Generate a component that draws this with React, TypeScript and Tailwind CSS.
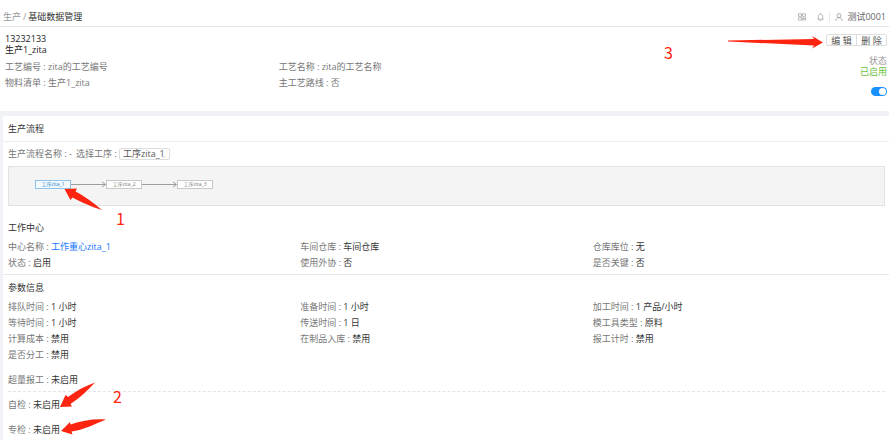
import { Fragment, useState } from 'react';
import type { ReactNode } from 'react';

type Item = { label: string; value: ReactNode };

const processes = ['工序zita_1', '工序zita_2', '工序zita_3'];

const workCenter: Item[] = [
  { label: '中心名称', value: <a href="#center" className="text-[#1677ff]">工作重心zita_1</a> },
  { label: '车间仓库', value: '车间仓库' },
  { label: '仓库库位', value: '无' },
  { label: '状态', value: '启用' },
  { label: '使用外协', value: '否' },
  { label: '是否关键', value: '否' },
];

const params: Item[] = [
  { label: '排队时间', value: '1 小时' },
  { label: '准备时间', value: '1 小时' },
  { label: '加工时间', value: '1 产品/小时' },
  { label: '等待时间', value: '1 小时' },
  { label: '传送时间', value: '1 日' },
  { label: '模工具类型', value: '原料' },
  { label: '计算成本', value: '禁用' },
  { label: '在制品入库', value: '禁用' },
  { label: '报工计时', value: '禁用' },
  { label: '是否分工', value: '禁用' },
];

function Colon() {
  return <span className="font-['Noto_Sans_CJK_TC',sans-serif] text-[7px]">：</span>;
}

function Field({ label, value }: Item) {
  return (
    <div className="text-[#333]">
      <span className="text-[#777]">{label}<Colon /></span>
      {value}
    </div>
  );
}

function Flow({ active, onSelect }: { active: string; onSelect: (name: string) => void }) {
  return (
    <div className="flex h-10 items-start border border-[#e2e2e2] bg-[#f4f4f4] pt-[13px] pl-[26px]">
      {processes.map((name, i) => (
        <Fragment key={name}>
          {i > 0 && (
            <svg className="h-[9px] w-[35px]" viewBox="0 0 35 9" fill="none" stroke="#888" strokeWidth="0.8">
              <path d="M0 4.5H34M31 2L34.5 4.5L31 7" />
            </svg>
          )}
          <button
            onClick={() => onSelect(name)}
            className={
              name === active
                ? 'h-[9px] w-9 border border-[#91c3ea] bg-[#f3faff] text-[5px] leading-[7px] text-[#2581c4]'
                : 'h-[9px] w-9 border border-[#c8c8c8] bg-white text-[5px] leading-[7px] text-[#777]'
            }
          >
            {name}
          </button>
        </Fragment>
      ))}
    </div>
  );
}

function Header() {
  return (
    <header className="flex items-center justify-between border-b border-[#e4e4e4] bg-white pt-2 pr-[3px] pl-[3px] leading-[18px]">
      <nav className="text-[#999]">
        <a href="#production">生产</a>
        <span className="px-[2px]">/</span>
        <span className="text-[#333]">基础数据管理</span>
      </nav>
      <div className="flex items-center text-[#666]">
        <button aria-label="扫码">
          <svg className="size-2" viewBox="0 0 8 8" fill="none" stroke="#aaa" strokeWidth="0.8">
            <path d="M0.5 0.8H3.5V3.3H0.5ZM4.5 0.8H7.5V3.3H4.5ZM0.5 4.6H3.5V7.2H0.5ZM4.7 4.3V7.5M6 4.3V7.5M4.7 5.8H7.7M7.5 4.3V7.5" />
          </svg>
        </button>
        <button aria-label="通知" className="ml-[10px]">
          <svg className="h-2 w-[9px]" viewBox="0 0 9 8" fill="none" stroke="#999" strokeWidth="0.7">
            <path d="M1.5 6.3H7.5M2.3 6.2V3.5C2.3 0.4 6.7 0.4 6.7 3.5V6.2M4.5 0.3V1M3.8 7.5H5.2" />
          </svg>
        </button>
        <span className="ml-1 h-[10px] w-px bg-[#e8e8e8]" />
        <svg className="ml-[5px] size-2" viewBox="0 0 8 8" fill="none" stroke="#999" strokeWidth="0.8">
          <circle cx="4" cy="2.6" r="2" />
          <path d="M0.8 8C0.9 5.8 2.2 4.6 4 4.6C5.8 4.6 7.1 5.8 7.2 8" />
        </svg>
        <span className="ml-1">测试0001</span>
      </div>
    </header>
  );
}

function Summary() {
  const [enabled, setEnabled] = useState(true);
  return (
    <section className="flex bg-white pt-[6px] pr-[2px] pb-[15px] pl-[5px]">
      <div className="flex-1">
        <h1 className="leading-[11px] text-[#222]">13232133<br />生产1_zita</h1>
        <div className="mt-1 grid grid-cols-3 leading-4 text-[#777]">
          <div>工艺编号 : zita的工艺编号</div>
          <div>工艺名称 : zita的工艺名称</div>
          <div className="col-start-1">物料清单 : 生产1_zita</div>
          <div>主工艺路线 : 否</div>
        </div>
      </div>
      <div className="flex flex-col items-end">
        <div className="flex pt-px">
          <button className="h-3 w-[31px] rounded-l-xs border border-[#ddd] leading-3 text-[#555]">编 辑</button>
          <button className="-ml-px h-3 w-[31px] rounded-r-xs border border-[#ddd] leading-3 text-[#555]">删 除</button>
        </div>
        <div className="mt-[9px] leading-[11px] text-[#999]">状态</div>
        <div className="leading-[11px] text-[#67c23a]">已启用</div>
        <label className="mt-[10px] flex">
          <input
            type="checkbox"
            role="switch"
            aria-label="启用状态"
            checked={enabled}
            onChange={(e) => setEnabled(e.target.checked)}
            className="flex h-[9px] w-4 appearance-none items-center rounded-full bg-[#bbb] px-px before:size-[7px] before:rounded-full before:bg-white checked:justify-end checked:bg-[#1890ff]"
          />
        </label>
      </div>
    </section>
  );
}

// Red numbered callouts laid over the page
function Callouts() {
  return (
    <div className="pointer-events-none absolute inset-0 font-['Noto_Sans_CJK_SC',sans-serif] text-base leading-4 text-[#fe2510]">
      <svg className="absolute top-0 left-0 h-[440px] w-[120px]" viewBox="0 0 120 440" fill="#fe2510">
        <path d="M64.5 189L77 188.5L75.5 191.5C84 196 94 203 102 210C92 207 81 202 72.5 197.5L70.5 200Z" />
        <path d="M60 407L65.5 395L68 397C76 391 85 386 95 382.5C89 389 80 398 70.5 404L72 406.5Z" />
        <path d="M61 431L70 422L70.5 424.5C82 420.5 94 418.5 106 419.5C95 424 83 430 71.5 431.5L72.5 434.5Z" />
      </svg>
      <svg className="absolute top-9 right-[66px] h-[13px] w-[95px]" viewBox="0 0 95 13" fill="#fe2510">
        <path d="M0 4.5L86 3L84 0L95 6.5L84 12.5L86 9.5L0 5.5Z" />
      </svg>
      <span className="absolute top-[210px] left-[116px]">1</span>
      <span className="absolute top-[388px] left-[113px]">2</span>
      <span className="absolute top-11 right-[216px]">3</span>
    </div>
  );
}

export default function App() {
  const [process, setProcess] = useState(processes[0]);

  return (
    <div className="relative min-h-screen bg-[#f0f2f5] font-['Open_Sans','Noto_Sans_CJK_SC',sans-serif] text-[9px]">
      <Header />
      <Summary />

      <main className="mt-[5px] ml-[3px] bg-white">
        <h2 className="border-b border-[#eee] pt-px pl-[5px] leading-6 text-[#333]">生产流程</h2>
        <div className="pt-[6px] pr-1 pl-[5px]">
          <div className="flex h-3 items-center leading-3 text-[#777]">
            <span>生产流程名称<Colon />-</span>
            <label htmlFor="process" className="ml-1">选择工序<Colon /></label>
            <div className="relative h-3">
              <select
                id="process"
                value={process}
                onChange={(e) => setProcess(e.target.value)}
                className="h-3 w-[51px] appearance-none rounded-xs border border-[#ddd] bg-white pl-[3px] leading-[10px] text-[#555]"
              >
                {processes.map((name) => <option key={name}>{name}</option>)}
              </select>
              <svg className="pointer-events-none absolute right-1 bottom-[2px] h-[2px] w-1" viewBox="0 0 4 2" fill="none" stroke="#bbb" strokeWidth="0.6">
                <path d="M0.3 0.2L2 1.7L3.7 0.2" />
              </svg>
            </div>
          </div>
          <div className="mt-[6px]">
            <Flow active={process} onSelect={setProcess} />
          </div>
        </div>

        <section className="border-b border-[#e8e8e8] pt-[14px] pr-1 pb-[3px] pl-[5px]">
          <h3 className="leading-4 text-[#333]">工作中心</h3>
          <div className="mt-[3px] grid grid-cols-3 leading-4">
            {workCenter.map((item) => <Field key={item.label} {...item} />)}
          </div>
        </section>

        <section className="pt-[5px] pr-1 pb-[2px] pl-[5px]">
          <h3 className="leading-4 text-[#333]">参数信息</h3>
          <div className="mt-[3px] grid grid-cols-3 leading-4">
            {params.map((item) => <Field key={item.label} {...item} />)}
          </div>
          <div className="mt-[9px] border-b border-dashed border-[#e4e4e4] pb-[3px] leading-4">
            <Field label="超量报工" value="未启用" />
          </div>
          <div className="mt-[5px] leading-4">
            <Field label="自检" value="未启用" />
          </div>
          <div className="mt-[9px] leading-4">
            <Field label="专检" value="未启用" />
          </div>
        </section>
      </main>

      <Callouts />
    </div>
  );
}
